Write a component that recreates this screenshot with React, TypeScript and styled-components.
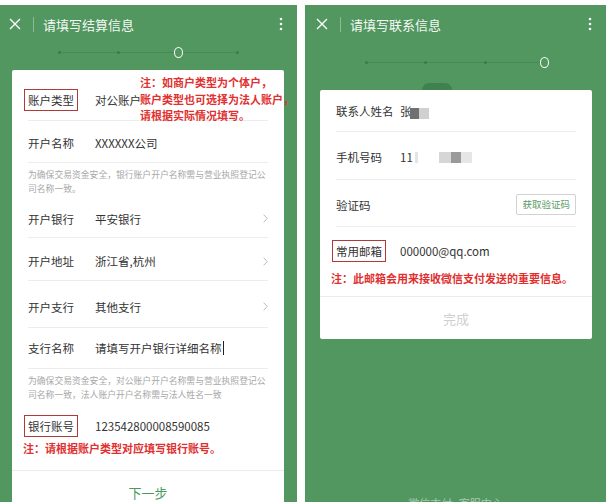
import React from 'react'
import styled, { createGlobalStyle } from 'styled-components'

const GREEN = '#52975f'
const RED = '#e03030'

const GlobalStyle = createGlobalStyle`
	html, body {
		margin: 0;
		padding: 0;
		background: #fff;
	}
	body {
		font-family: 'Noto Sans CJK SC', 'Noto Sans', sans-serif;
	}
	* {
		box-sizing: border-box;
	}
`

const Page = styled.main`
	display: flex;
	gap: 8px;
	padding-top: 5px;
	height: 502px;
	overflow: hidden;
`

const Phone = styled.section<{ $w: number }>`
	width: ${(p) => p.$w}px;
	height: 497px;
	flex-shrink: 0;
	background: ${GREEN};
	display: flex;
	flex-direction: column;
	overflow: hidden;
`

const Header = styled.header<{ $pl: number }>`
	height: 38px;
	flex-shrink: 0;
	display: flex;
	align-items: center;
	padding: 0 14px 0 ${(p) => p.$pl}px;
	color: #fff;
`

const VDivider = styled.span`
	width: 1px;
	height: 15px;
	background: rgba(255, 255, 255, 0.35);
	margin: 0 9px 0 12px;
`

const Title = styled.h1`
	flex: 1;
	margin: 0;
	font-size: 13px;
	font-weight: 400;
	color: rgba(255, 255, 255, 0.96);
`

const Steps = styled.div<{ $h: number }>`
	height: ${(p) => p.$h}px;
	flex-shrink: 0;
	margin-bottom: 9px;
	display: flex;
	align-items: center;
	justify-content: center;
`

const Track = styled.div`
	position: relative;
	width: 188px;
	display: flex;
	justify-content: space-between;
	align-items: center;

	&::before {
		content: '';
		position: absolute;
		left: 4px;
		right: 4px;
		top: 50%;
		height: 1px;
		background: #468a55;
	}
`

const Stop = styled.span<{ $current: boolean }>`
	position: relative;
	width: 9px;
	height: 9px;
	display: flex;
	align-items: center;
	justify-content: center;

	&::after {
		content: '';
		display: block;
		border-radius: 50%;
		${(p) =>
			p.$current
				? `
			width: 9px;
			height: 9px;
			border: 1.5px solid #fff;
			background: ${GREEN};
		`
				: `
			width: 3px;
			height: 3px;
			background: #3c7a4a;
		`}
	}
`

const Card = styled.div<{ $ml: number; $mr: number }>`
	position: relative;
	flex-shrink: 0;
	margin: 0 ${(p) => p.$mr}px 0 ${(p) => p.$ml}px;
	background: #fff;
	border-radius: 2px;
`

const Dome = styled.span`
	position: absolute;
	top: -7px;
	left: 102px;
	width: 30px;
	height: 7px;
	border-radius: 15px 15px 0 0;
	background: #3f8250;
`

const Body = styled.div`
	padding: 0 16px;
`

const Row = styled.div<{ $h: number; $pt?: number }>`
	position: relative;
	height: ${(p) => p.$h}px;
	padding-top: ${(p) => p.$pt || 0}px;
	display: flex;
	align-items: center;
	border-bottom: 1px solid #ececec;
`

const Label = styled.span<{ $w: number }>`
	width: ${(p) => p.$w}px;
	flex-shrink: 0;
	font-size: 11.5px;
	color: #333;
`

const Boxed = styled.span`
	display: inline-block;
	margin-left: -4px;
	padding: 2px 3px;
	line-height: 16px;
	border: 1.5px solid #b03a3a;
	color: #333;
`

const Value = styled.span`
	flex: 1;
	display: flex;
	align-items: center;
	font-size: 11.5px;
	color: #333;
	white-space: nowrap;
`

const Caret = styled.span`
	display: inline-block;
	width: 1.5px;
	height: 14px;
	margin-left: 1px;
	background: #222;
`

const Mosaic = styled.span<{ $c: string; $w: number }>`
	display: inline-block;
	width: ${(p) => p.$w}px;
	height: 11px;
	background: ${(p) => p.$c};
`

const Hint = styled.p<{ $pb: number }>`
	margin: 0;
	padding: 5px 0 ${(p) => p.$pb}px;
	font-size: 8.8px;
	line-height: 14px;
	color: #a8a8a8;
	word-break: break-all;
`

const Callout = styled.div`
	position: absolute;
	left: 112px;
	top: 4px;
	white-space: nowrap;
	font-size: 11px;
	line-height: 16.5px;
	font-weight: 700;
	color: ${RED};
`

const Noted = styled.div<{ $pt: number; $gap: number; $pb: number }>`
	padding: ${(p) => p.$pt}px 0 ${(p) => p.$pb}px;

	& > p {
		margin-top: ${(p) => p.$gap}px;
	}
`

const BoxRow = styled.div`
	display: flex;
	align-items: center;
`

const Note = styled.p`
	margin: 0 0 0 -5px;
	font-size: 11px;
	line-height: 16px;
	font-weight: 700;
	color: ${RED};
	white-space: nowrap;
`

const CodeButton = styled.button`
	padding: 3px 5px;
	font-family: inherit;
	font-size: 9.5px;
	line-height: 13px;
	color: #5a9c68;
	background: #fff;
	border: 1px solid #d2d2d2;
	border-radius: 2px;
`

const Action = styled.div<{ $h: number; $color: string }>`
	height: ${(p) => p.$h}px;
	display: flex;
	align-items: center;
	justify-content: center;
	border-top: 1px solid #ececec;
	font-size: 13px;
	color: ${(p) => p.$color};
`

const Footer = styled.div`
	margin-top: auto;
	margin-bottom: -11px;
	height: 20px;
	flex-shrink: 0;
	text-align: center;
	font-size: 11px;
	line-height: 20px;
	color: rgba(255, 255, 255, 0.5);
	word-spacing: 4px;
`

const CloseIcon = () => (
	<svg width="12" height="12" viewBox="0 0 12 12" fill="none">
		<path d="M1 1L11 11M11 1L1 11" stroke="#fff" strokeWidth="1.4" />
	</svg>
)

const MoreIcon = () => (
	<svg width="4" height="14" viewBox="0 0 4 14" fill="#fff">
		<circle cx="2" cy="2" r="1.3" />
		<circle cx="2" cy="7" r="1.3" />
		<circle cx="2" cy="12" r="1.3" />
	</svg>
)

const Chevron = () => (
	<svg width="5" height="9" viewBox="0 0 5 9" fill="none">
		<path d="M0.6 0.6L4.2 4.5L0.6 8.4" stroke="#bdbdbd" strokeWidth="1" />
	</svg>
)

function TopBar({ title, pl }: { title: string; pl: number }) {
	return (
		<Header $pl={pl}>
			<CloseIcon />
			<VDivider />
			<Title>{title}</Title>
			<MoreIcon />
		</Header>
	)
}

function Progress({ h, current }: { h: number; current: number }) {
	return (
		<Steps $h={h}>
			<Track>
				{[0, 1, 2, 3].map((i) => (
					<Stop key={`stop-${i}`} $current={i === current} />
				))}
			</Track>
		</Steps>
	)
}

function SettlementPhone() {
	const LW = 67
	return (
		<Phone $w={297}>
			<TopBar title="请填写结算信息" pl={9} />
			<Progress h={18} current={2} />
			<Card $ml={12} $mr={13}>
				<Body>
					<Row $h={51} $pt={9}>
						<Label $w={LW}>
							<Boxed>账户类型</Boxed>
						</Label>
						<Value>对公账户</Value>
						<Callout>
							注：如商户类型为个体户，
							<br />
							账户类型也可选择为法人账户，
							<br />
							请根据实际情况填写。
						</Callout>
					</Row>
					<Row $h={42} $pt={3}>
						<Label $w={LW}>开户名称</Label>
						<Value>XXXXXX公司</Value>
					</Row>
					<Hint $pb={4}>
						为确保交易资金安全，银行账户开户名称需与营业执照登记公司名称一致。
					</Hint>
					<Row $h={38}>
						<Label $w={LW}>开户银行</Label>
						<Value>平安银行</Value>
						<Chevron />
					</Row>
					<Row $h={43} $pt={4}>
						<Label $w={LW}>开户地址</Label>
						<Value>浙江省,杭州</Value>
						<Chevron />
					</Row>
					<Row $h={47} $pt={5}>
						<Label $w={LW}>开户支行</Label>
						<Value>其他支行</Value>
						<Chevron />
					</Row>
					<Row $h={41}>
						<Label $w={LW}>支行名称</Label>
						<Value>
							请填写开户银行详细名称
							<Caret />
						</Value>
					</Row>
					<Hint $pb={8}>
						为确保交易资金安全，对公账户开户名称需与营业执照登记公司名称一致，法人账户开户名称需与法人姓名一致
					</Hint>
					<Noted $pt={5} $gap={3} $pb={14}>
						<BoxRow>
							<Label $w={LW}>
								<Boxed>银行账号</Boxed>
							</Label>
							<Value>123542800008590085</Value>
						</BoxRow>
						<Note>注：请根据账户类型对应填写银行账号。</Note>
					</Noted>
				</Body>
				<Action $h={44} $color="#4a9a5c">
					下一步
				</Action>
			</Card>
		</Phone>
	)
}

function ContactPhone() {
	const LW = 64
	return (
		<Phone $w={301}>
			<TopBar title="请填写联系信息" pl={11} />
			<Progress h={38} current={3} />
			<Card $ml={15} $mr={14}>
				<Dome />
				<Body>
					<Row $h={42}>
						<Label $w={LW}>联系人姓名</Label>
						<Value>
							张
							<Mosaic $c="#707070" $w={9} style={{ marginLeft: -2, marginTop: 5 }} />
							<Mosaic $c="#d0d0d0" $w={10} style={{ marginTop: 5 }} />
						</Value>
					</Row>
					<Row $h={48} $pt={3}>
						<Label $w={LW}>手机号码</Label>
						<Value>
							11
							<Mosaic $c="#e4e4e4" $w={3} style={{ marginLeft: 2 }} />
							<Mosaic $c="#d6d6d6" $w={12} style={{ marginLeft: 21 }} />
							<Mosaic $c="#9a9a9a" $w={10} />
							<Mosaic $c="#e6e6e6" $w={11} />
						</Value>
					</Row>
					<Row $h={47} $pt={3}>
						<Label $w={LW}>验证码</Label>
						<Value />
						<CodeButton>获取验证码</CodeButton>
					</Row>
					<Noted $pt={13} $gap={8} $pb={10}>
						<BoxRow>
							<Label $w={LW}>
								<Boxed>常用邮箱</Boxed>
							</Label>
							<Value>000000@qq.com</Value>
						</BoxRow>
						<Note>注：此邮箱会用来接收微信支付发送的重要信息。</Note>
					</Noted>
				</Body>
				<Action $h={43} $color="#cfcfcf">
					完成
				</Action>
			</Card>
			<Footer>微信支付 客服中心</Footer>
		</Phone>
	)
}

export default function App() {
	return (
		<>
			<GlobalStyle />
			<Page>
				<SettlementPhone />
				<ContactPhone />
			</Page>
		</>
	)
}
